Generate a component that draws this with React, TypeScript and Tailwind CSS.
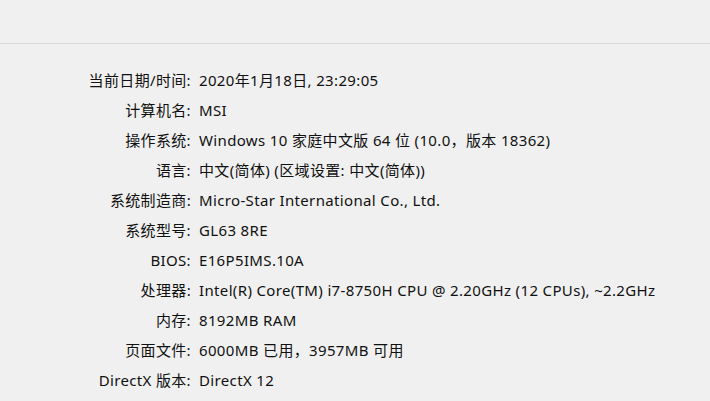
import React from 'react';

const rows: [string, string][] = [
  ['当前日期/时间:', '2020年1月18日, 23:29:05'],
  ['计算机名:', 'MSI'],
  ['操作系统:', 'Windows 10 家庭中文版 64 位 (10.0，版本 18362)'],
  ['语言:', '中文(简体) (区域设置: 中文(简体))'],
  ['系统制造商:', 'Micro-Star International Co., Ltd.'],
  ['系统型号:', 'GL63 8RE'],
  ['BIOS:', 'E16P5IMS.10A'],
  ['处理器:', 'Intel(R) Core(TM) i7-8750H CPU @ 2.20GHz (12 CPUs), ~2.2GHz'],
  ['内存:', '8192MB RAM'],
  ['页面文件:', '6000MB 已用，3957MB 可用'],
  ['DirectX 版本:', 'DirectX 12'],
];

export default function App() {
  return (
    <div
      className="w-[710px] h-[401px] overflow-hidden bg-[#f0f0f0] text-[#111] text-[15px] tracking-[0.35px]"
      style={{ fontFamily: '"Noto Sans", "Noto Sans CJK SC", sans-serif' }}
    >
      <div className="h-[44px] border-b border-[#dadada]" />
      <div className="pt-[21px] flex flex-col">
        {rows.map(([label, value]) => (
          <div key={label} className="flex h-[30px] items-center">
            <div className="w-[191px] text-right whitespace-nowrap">{label}</div>
            <div className="ml-[8px] whitespace-nowrap">{value}</div>
          </div>
        ))}
      </div>
    </div>
  );
}
